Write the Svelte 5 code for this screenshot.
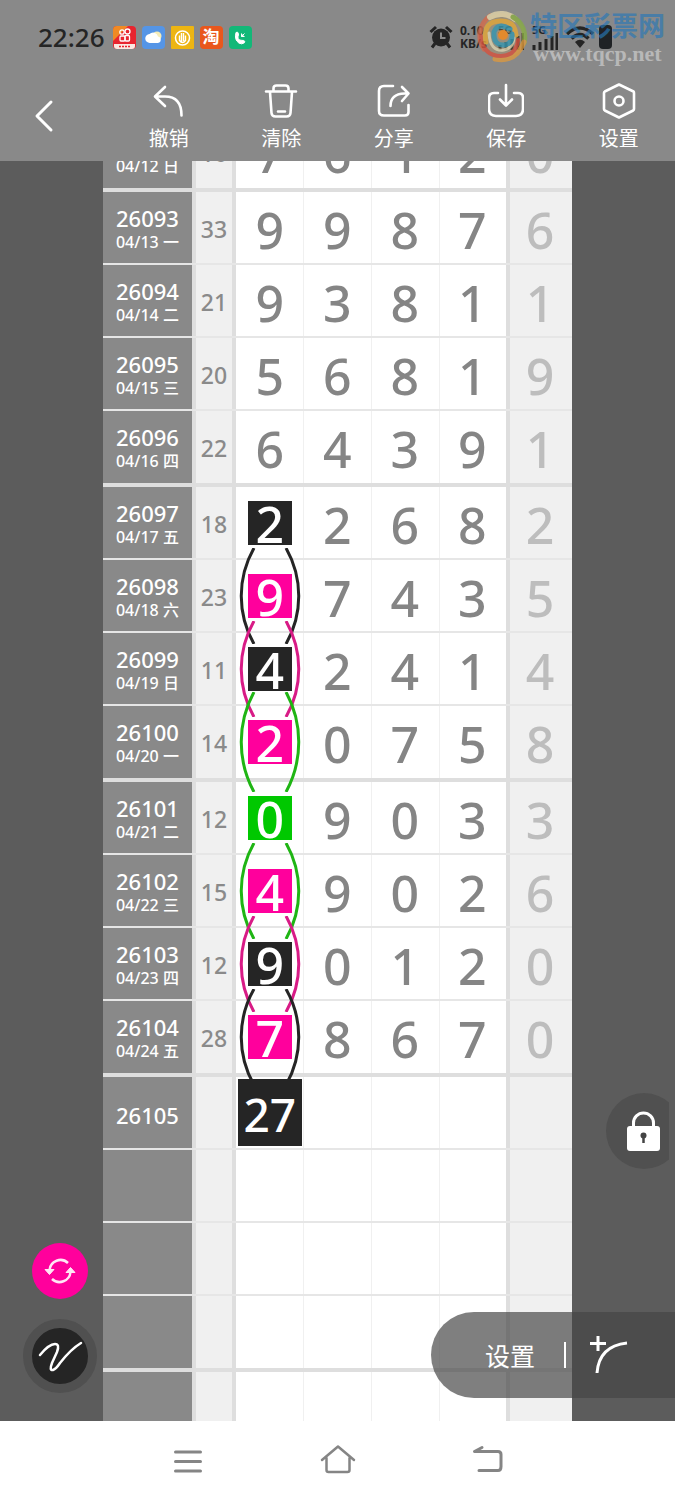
<script>
  const rows = [
    { id: '26092', date: '04/12 日', sum: 16, d: [7, 6, 1, 2], last: 0, end: true },
    { id: '26093', date: '04/13 一', sum: 33, d: [9, 9, 8, 7], last: 6 },
    { id: '26094', date: '04/14 二', sum: 21, d: [9, 3, 8, 1], last: 1 },
    { id: '26095', date: '04/15 三', sum: 20, d: [5, 6, 8, 1], last: 9 },
    { id: '26096', date: '04/16 四', sum: 22, d: [6, 4, 3, 9], last: 1, end: true },
    { id: '26097', date: '04/17 五', sum: 18, d: [2, 2, 6, 8], last: 2, mark: 'black' },
    { id: '26098', date: '04/18 六', sum: 23, d: [9, 7, 4, 3], last: 5, mark: 'pink', arc: 'black' },
    { id: '26099', date: '04/19 日', sum: 11, d: [4, 2, 4, 1], last: 4, mark: 'black', arc: 'pink' },
    { id: '26100', date: '04/20 一', sum: 14, d: [2, 0, 7, 5], last: 8, mark: 'pink', arc: 'green', end: true },
    { id: '26101', date: '04/21 二', sum: 12, d: [0, 9, 0, 3], last: 3, mark: 'green' },
    { id: '26102', date: '04/22 三', sum: 15, d: [4, 9, 0, 2], last: 6, mark: 'pink', arc: 'green' },
    { id: '26103', date: '04/23 四', sum: 12, d: [9, 0, 1, 2], last: 0, mark: 'black', arc: 'pink' },
    { id: '26104', date: '04/24 五', sum: 28, d: [7, 8, 6, 7], last: 0, mark: 'pink', arc: 'black', end: true },
    { id: '26105', date: '', sum: '', d: [27, '', '', ''], last: '', mark: 'big' },
    { id: '', date: '', sum: '', d: ['', '', '', ''], last: '' },
    { id: '', date: '', sum: '', d: ['', '', '', ''], last: '' },
    { id: '', date: '', sum: '', d: ['', '', '', ''], last: '', end: true },
    { id: '', date: '', sum: '', d: ['', '', '', ''], last: '' }
  ];
</script>

<div class="app">
  <header>
    <div class="status">
      <span class="time">22:26</span>
      <div class="apps">
        <svg viewBox="0 0 23 23"><rect width="23" height="23" rx="4" fill="#e8252f"/><path d="M0 15V4a4 4 0 0 1 4-4h11z" fill="#f08a24"/><g fill="none" stroke="#fff" stroke-width="1.3"><circle cx="9" cy="6" r="2.2"/><circle cx="14.500" cy="5.500" r="2.500"/><rect x="7" y="10" width="5" height="5" rx="1"/><rect x="12" y="9.500" width="4.500" height="5.500" rx="1"/></g><path d="M1 18h21v2a3 3 0 0 1-3 3H4a3 3 0 0 1-3-3z" fill="#fbe9e2"/><path d="M6 20.500h12" stroke="#e8252f" stroke-width="1.500" stroke-dasharray="2 1"/></svg>
        <svg viewBox="0 0 23 23"><rect width="23" height="23" rx="4" fill="#5595e6"/><circle cx="15" cy="10" r="4.500" fill="#f5ecb8"/><path d="M8 17a4.500 4.500 0 0 1-.5-9 5 5 0 0 1 8.500 2.500A3.300 3.300 0 0 1 16 17z" fill="#fff"/></svg>
        <svg viewBox="0 0 23 23"><rect width="23" height="23" rx="1" fill="#edb512"/><circle cx="11.500" cy="12" r="7" fill="none" stroke="#fff" stroke-width="1.500"/><path d="M8.500 15V9.500m2 6V7m2 8V7m2 8V9.500m-6 5q3 4 6 0" fill="none" stroke="#fff" stroke-width="1.400"/></svg>
        <span class="tao">淘</span>
        <svg viewBox="0 0 23 23"><rect width="23" height="23" rx="4" fill="#12b878"/><path d="M7 6.500q2-1 2.300.8l.2 2.200q-1 1.200-.3 3 1.300 2.200 3.300 1.800l2.200.2q2 .8.6 2.300-2.500 2-5.500.2Q5 13.500 7 6.500zM15.500 7.500l-3 3m0-3v3h3" fill="#fff" stroke="#fff"/></svg>
      </div>
      <div class="system">
        <svg class="alarm" viewBox="0 0 24 24"><circle cx="12" cy="12.500" r="9" fill="#252525"/><path d="M1.500 7 7 2m10 0 5.500 5M6 18.500 3 22.500m15-4 3 4" stroke="#252525" stroke-width="3"/><path d="M12 7.500v5.500h4.500" fill="none" stroke="#898989" stroke-width="2"/></svg>
        <span class="speed">0.10<br>KB/s</span>
        <div class="signal"><span>5G</span><svg viewBox="0 0 26 18"><path d="M2 18v-5M8 18v-8M14 18V7M20 18V4M25 18V1" stroke="#252525" stroke-width="3"/></svg></div>
        <div class="signal"><span>5G</span><svg viewBox="0 0 26 18"><path d="M2 18v-5M8 18v-8M14 18V7M20 18V4M25 18V1" stroke="#252525" stroke-width="3"/></svg></div>
        <svg class="wifi" viewBox="0 0 30 24"><path d="M2 9q13-12 26 0M6.500 13.500q8.500-8 17 0" fill="none" stroke="#252525" stroke-width="3.500"/><path d="M10 17q5-4.500 10 0l-5 6z" fill="#252525"/></svg>
        <span class="battery"></span>
      </div>
      <div class="watermark">
        <svg viewBox="0 0 52 56"><circle cx="26" cy="28" r="23" fill="#c9a45a" opacity=".25"/><g fill="none" stroke-linecap="round" opacity=".75"><path d="M8 41A24 24 0 0 1 14 8" stroke="#d76849" stroke-width="5"/><path d="M14 9a22 22 0 0 1 25 2" stroke="#e8d9ab" stroke-width="6"/><path d="M37 9a23 23 0 0 1 11 26" stroke="#86ae42" stroke-width="5"/><path d="M48 34q-8 21-29 17" stroke="#e09a3c" stroke-width="5"/><path d="M5 28q2 20 20 20 15 0 17-16" stroke="#d74c3c" stroke-width="4"/><path d="M10 34Q6 13 25 13q14 0 15 14" stroke="#e6a834" stroke-width="5"/><path d="M13 25q1 19 15 17 9-2 10-12" stroke="#dfd8b5" stroke-width="3"/><path d="M34 21q-12-7-16 3-1 14 11 13 8-2 7-11" stroke="#2c96b5" stroke-width="5"/></g><circle cx="27" cy="27" r="5" fill="#e38a2d"/></svg>
        <p><strong>特区彩票网</strong><em>www.tqcp.net</em></p>
      </div>
    </div>
    <nav class="tools">
      <button class="back" aria-label="返回"><svg viewBox="0 0 24 36"><path d="M19 4 5 18l14 14" stroke-width="3"/></svg></button>
      <button><svg viewBox="0 0 36 36"><path d="M14 4 4 13.500 14 23M4.500 13.500H14q16.500 0 16.500 19"/></svg>撤销</button>
      <button><svg viewBox="0 0 36 36"><path d="M3 8.500h30M10.500 8V5.500q0-3 3-3h9q3 0 3 3V8M7 9l1.500 21q.3 3.500 4 3.500h11q3.700 0 4-3.500L29 9M15 28.500h7"/></svg>清除</button>
      <button><svg viewBox="0 0 36 36"><path d="M17 3H8Q3 3 3 8v20q0 4.500 5 4.500h21q3.500 0 3.500-3.500v-7M14.500 23q0-12 14-12.500H32M26 4l6.500 6.500L26 18"/></svg>分享</button>
      <button><svg viewBox="0 0 36 36"><path d="M18 2v20M12 16.500l6 6 6-6M10 10H6q-5 0-5 5v11q0 7 7 7h20q7 0 7-7V15q0-5-5-5h-4"/></svg>保存</button>
      <button><svg viewBox="0 0 36 36"><path d="M18 1.500 32.500 8.500Q33 9 33 10v16q0 1-.8 1.500L18 34.500 3.800 27.500Q3 27 3 26V10q0-1 .8-1.500z"/><circle cx="18" cy="18" r="4.500"/></svg>设置</button>
    </nav>
  </header>

  <main>
    <table>
      <colgroup><col class="c-date"><col class="c-sum"><col><col><col><col><col class="c-last"></colgroup>
      <tbody>
        {#each rows as r}
          <tr class:end={r.end}>
            <th scope="row"><span class="id">{r.id}</span>{#if r.date}<span class="date">{r.date}</span>{/if}</th>
            <td class="sum">{r.sum}</td>
            {#each r.d as n, i}
              <td class="num" class:marked={i === 0 && r.mark}>
                {#if i === 0 && r.mark}
                  <div class="cell">
                    <span class="mark {r.mark}">{n}</span>
                    {#if r.arc}
                      <svg class="arc {r.arc}" class:tall={r.end && r.arc === 'green'} viewBox="0 0 64 96" preserveAspectRatio="none"><path d="M16 0C-1 30-1 66 16 96M48 0C65 30 65 66 48 96"/></svg>
                    {/if}
                  </div>
                {:else}{n}{/if}
              </td>
            {/each}
            <td class="last">{r.last}</td>
          </tr>
        {/each}
      </tbody>
    </table>

    <button class="lock" aria-label="锁定"><svg viewBox="0 0 76 76"><circle cx="38" cy="38" r="38" fill="#505050"/><path d="M27.500 36V30a10 10 0 0 1 20 0v6" fill="none" stroke="#fff" stroke-width="3"/><rect x="21" y="33" width="33" height="25" rx="3" fill="#fff"/><circle cx="37.500" cy="42.500" r="3" fill="#444"/><path d="M37.500 43v7" stroke="#444" stroke-width="2.500"/></svg></button>
    <div class="floats">
      <button class="round refresh" aria-label="刷新"><svg viewBox="0 0 32 32"><path d="M5.500 15A11 11 0 0 1 24 8M26.500 17A11 11 0 0 1 8 24" fill="none" stroke="#ffe6f5" stroke-width="2.500"/><path d="M1 14.500h9L5.500 19.500zM22 17.500h9L26.500 12.500z" fill="#ffe6f5" stroke="#ffe6f5" stroke-linejoin="round"/></svg></button>
      <button class="round pen" aria-label="画笔"><svg viewBox="0 0 56 56"><path d="M8 27Q17 16 23 16q5 0 2 8l-5 11q-3 8 1 7 3-1 7-7 11-14 21-20" fill="none" stroke="#fff" stroke-width="2.500" stroke-linecap="round"/></svg></button>
    </div>
    <div class="pill">
      <button>设置</button>
      <i></i>
      <button aria-label="添加曲线"><svg viewBox="0 0 40 42"><path d="M1 9.500h16M9 2v15M8 39Q10 12 38 9" fill="none" stroke="#fff" stroke-width="3"/></svg></button>
    </div>
  </main>

  <footer>
    <button aria-label="菜单"><svg viewBox="0 0 36 36"><path d="M5.500 9h25M5.500 18.500h25M5.500 28h25"/></svg></button>
    <button aria-label="主页"><svg viewBox="0 0 36 36"><path d="M2 17 18 3.500 34 17M6.500 15v12q0 2 2 2h19q2 0 2-2V15" stroke-width="2.500"/></svg></button>
    <button aria-label="后退"><svg viewBox="0 0 36 36"><path d="M12 4.500 4.500 8.500H28q3 0 3 3v12q0 4-3 4H9"/></svg></button>
  </footer>
</div>

<style>
  :global(body) { margin: 0; }
  .app { height: 100vh; display: flex; flex-direction: column; font-family: "Noto Sans", "Noto Sans CJK SC", sans-serif; }
  button { border: 0; padding: 0; margin: 0; background: none; color: #fff; font: inherit; }
  svg { display: block; }

  header { background: #898989; flex: none; }
  .status { position: relative; height: 74px; display: flex; align-items: center; padding: 0 63px 0 38px; color: #252525; }
  .time { font-size: 26px; font-weight: 500; }
  .apps { display: flex; gap: 6px; margin-left: 8px; }
  .apps svg { width: 23px; height: 23px; }
  .tao { width: 23px; height: 23px; border-radius: 4px; background: #e9571c; color: #fff; font-size: 17px; font-weight: 700; line-height: 22px; text-align: center; }
  .system { display: flex; align-items: center; gap: 7px; margin-left: auto; }
  .alarm { width: 24px; height: 24px; }
  .speed { width: 30px; font-size: 12px; line-height: 13px; font-weight: 700; white-space: nowrap; }
  .signal { width: 26px; height: 26px; display: grid; align-items: end; margin-left: 1px; }
  .signal span, .signal svg { grid-area: 1 / 1; }
  .signal span { align-self: start; font-size: 11px; line-height: 11px; font-weight: 700; }
  .signal svg { width: 26px; height: 18px; }
  .wifi { width: 30px; height: 24px; }
  .battery { width: 13px; height: 24px; border-radius: 4px; background: #1f2225; margin-left: -3px; }
  .watermark { position: absolute; right: 10px; top: 8px; display: flex; gap: 2px; }
  .watermark svg { width: 52px; height: 56px; }
  .watermark p { margin: 0; display: flex; flex-direction: column; align-items: center; }
  .watermark strong { font-size: 27px; font-weight: 700; line-height: 36px; color: #2878b8; opacity: .65; }
  .watermark em { font: 700 22px/20px "Liberation Serif", serif; color: #c4c4c4; opacity: .8; }

  .tools { display: grid; grid-template-columns: repeat(6, 1fr); height: 87px; }
  .tools button { display: flex; flex-direction: column; align-items: center; gap: 6px; padding-top: 9px; font-size: 20px; line-height: 28px; }
  .tools svg { width: 36px; height: 36px; fill: none; stroke: #fff; stroke-width: 2.6; stroke-linecap: round; stroke-linejoin: round; }
  .tools .back { align-items: flex-start; padding: 24px 0 0 32px; }
  .tools .back svg { width: 24px; }

  main { flex: 1; min-height: 0; position: relative; overflow: hidden; background: #5c5c5c; }
  table { width: 69.5%; margin: -45px auto 0; table-layout: fixed; border-collapse: separate; border-spacing: 0; background: #fff; }
  .c-date { width: 93px; }
  .c-sum { width: 40px; }
  .c-last { width: 66px; }
  tr { height: 73px; }
  tr.end { height: 76px; }
  th, td { box-sizing: border-box; padding: 4px 0 0; text-align: center; font-weight: 400; border-bottom: 2px solid #e6e6e6; vertical-align: middle; }
  .end th, .end td { border-bottom: 4px solid #dedede; }
  th { background: #898989; color: #fff; box-shadow: inset -4px 0 #dedede; padding-right: 4px; }
  .id, .date { display: block; line-height: 24px; white-space: nowrap; font-weight: 500; }
  .id { font-size: 22px; }
  .date { font-size: 16px; }
  .sum { background: #f0f0f0; color: #8a8a8a; font-size: 23px; line-height: 24px; font-weight: 500; box-shadow: inset -4px 0 #dedede; padding: 2px 4px 0 0; }
  .num, .last { font-size: 50px; line-height: 60px; font-weight: 500; color: #858585; }
  .num + .num { box-shadow: inset 1px 0 #f0f0f0; }
  .last { background: #f0f0f0; color: #bdbdbd; box-shadow: inset 4px 0 #dedede; padding-left: 2px; }
  .marked { padding: 0; }
  .cell { position: relative; display: grid; align-content: center; justify-content: center; height: 60px; }
  .mark { width: 44px; height: 44px; line-height: 47px; color: #fff; outline: 3px solid #fff; }
  .mark.black { background: #252525; }
  .mark.pink { background: #ff009c; }
  .mark.green { background: #00c800; }
  .mark.big { width: 64px; height: 67px; line-height: 70px; font-size: 46px; background: #252525; outline: 0; }
  .arc { position: absolute; left: 50%; top: 50%; width: 64px; height: 96px; transform: translate(-50%, -50%); fill: none; stroke-width: 3; pointer-events: none; }
  .arc.tall { height: 100px; }
  .arc.black { stroke: #252525; }
  .arc.pink { stroke: #d81b86; }
  .arc.green { stroke: #1fb514; }

  .lock { position: absolute; right: 6px; top: 932px; width: 63px; height: 76px; overflow: hidden; }
  .lock svg { width: 76px; height: 76px; }
  .floats { position: absolute; left: 23px; bottom: 28px; display: flex; flex-direction: column; align-items: center; gap: 20px; }
  .round { width: 56px; height: 56px; border-radius: 50%; display: grid; place-items: center; }
  .refresh { background: #ff009c; }
  .refresh svg { width: 32px; height: 32px; }
  .pen { box-sizing: content-box; border: 9px solid #505050; background: #252525; }
  .pen svg { width: 56px; height: 56px; }
  .pill { position: absolute; right: 0; bottom: 23px; box-sizing: border-box; height: 86px; display: flex; align-items: center; padding: 0 46px 0 54px; border-radius: 43px 0 0 43px; background: rgba(70, 70, 70, .69); font-size: 25px; }
  .pill i { width: 2px; height: 26px; margin: 0 23px 0 29px; background: #fff; }
  .pill svg { width: 40px; height: 42px; }

  footer { flex: none; height: 79px; display: flex; justify-content: center; align-items: center; gap: 114px; background: #fff; }
  footer svg { width: 36px; height: 36px; fill: none; stroke: #858585; stroke-width: 3; stroke-linecap: round; stroke-linejoin: round; }
</style>
